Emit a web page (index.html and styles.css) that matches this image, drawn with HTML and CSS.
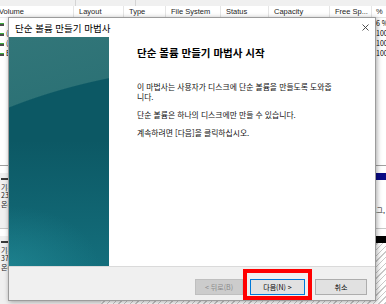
FILE: index.html
```html
<!DOCTYPE html>
<html lang="ko">
<head>
    <meta charset="UTF-8">
    <meta name="viewport" content="width=device-width, initial-scale=1.0">
    <title>디스크 관리 - 단순 볼륨 만들기 마법사</title>
    <link rel="stylesheet" href="styles.css">
</head>
<body>
    <div class="disk-manager">
        <div class="toolbar">
            <span class="tool"></span>
            <span class="tool tool-small"></span>
        </div>
        <div class="volume-list">
            <div class="list-header">
                <div class="col c-volume">Volume</div>
                <div class="col c-layout">Layout</div>
                <div class="col c-type">Type</div>
                <div class="col c-fs">File System</div>
                <div class="col c-status">Status</div>
                <div class="col c-capacity">Capacity</div>
                <div class="col c-free">Free Sp...</div>
                <div class="col c-pct">%</div>
            </div>
            <!-- only the edges of the list show around the dialog -->
            <div class="list-row">
                <div class="cell c-volume"><span class="vol-icon"></span></div>
                <div class="cell c-hidden"></div>
                <div class="cell c-pct">6 %</div>
            </div>
            <div class="list-row">
                <div class="cell c-volume"><span class="vol-icon"></span>(디</div>
                <div class="cell c-hidden"></div>
                <div class="cell c-pct">100 %</div>
            </div>
            <div class="list-row">
                <div class="cell c-volume"><span class="vol-icon"></span>(디</div>
                <div class="cell c-hidden"></div>
                <div class="cell c-pct">100 %</div>
            </div>
            <div class="list-row">
                <div class="cell c-volume"><span class="vol-icon"></span>E</div>
                <div class="cell c-hidden"></div>
                <div class="cell c-pct">100 %</div>
            </div>
        </div>
        <div class="disk-map">
            <div class="disk">
                <div class="disk-label">
                    <div><span class="disk-icon"></span></div>
                    <div>기본</div>
                    <div>238</div>
                    <div>온라인</div>
                </div>
                <div class="partition">
                    <div class="part-bar"></div>
                    <div class="part-line"></div>
                    <div class="part-line"></div>
                    <div class="part-line"></div>
                    <div class="part-line part-tail"><span>로그,</span></div>
                </div>
            </div>
            <div class="disk">
                <div class="disk-label">
                    <div><span class="disk-icon"></span></div>
                    <div>기본</div>
                    <div>372</div>
                    <div>온라인</div>
                </div>
                <div class="partition unallocated">
                    <div class="part-bar"></div>
                    <div class="hatch"></div>
                </div>
            </div>
        </div>
    </div>

    <div class="wizard">
        <div class="wizard-title">
            <span>단순 볼륨 만들기 마법사</span>
            <svg class="close" width="7" height="7" viewBox="0 0 7 7">
                <path d="M0.5 0.5L6.5 6.5M6.5 0.5L0.5 6.5" stroke="#3c3c3c" stroke-width="0.9" fill="none"/>
            </svg>
        </div>
        <div class="wizard-body">
            <div class="wizard-art"></div>
            <div class="wizard-content">
                <h1>단순 볼륨 만들기 마법사 시작</h1>
                <p>이 마법사는 사용자가 디스크에 단순 볼륨을 만들도록 도와줍<br>니다.</p>
                <p>단순 볼륨은 하나의 디스크에만 만들 수 있습니다.</p>
                <p>계속하려면 [다음]을 클릭하십시오.</p>
            </div>
        </div>
        <div class="wizard-footer">
            <button class="btn btn-back" disabled>&lt; 뒤로(B)</button>
            <button class="btn btn-next">다음(N) &gt;</button>
            <button class="btn btn-cancel">취소</button>
            <span class="highlight"></span>
        </div>
    </div>
</body>
</html>
```

FILE: styles.css
```css
body {
    margin: 0;
    width: 386px;
    height: 304px;
    overflow: hidden;
    position: relative;
    background-color: #ffffff;
    font-family: 'Liberation Sans', 'Noto Sans CJK KR', sans-serif;
    color: #000000;
}

/* background: disk management window */
.disk-manager {
    height: 304px;
    display: flex;
    flex-direction: column;
    overflow: hidden;
}

.toolbar {
    height: 6px;
    flex: none;
    display: flex;
    background-color: #f0f0f0;
}

.tool {
    width: 75px;
    border-right: 1px solid #d4d4d4;
}

.tool-small {
    width: 59px;
}

.volume-list {
    height: 159px;
    flex: none;
    background-color: #ffffff;
}

.list-header {
    display: flex;
    height: 11px;
    margin-left: -4px;
    border-bottom: 1px solid #e5e5e5;
    font-size: 7.5px;
    line-height: 11px;
    color: #1e1e1e;
}

.list-row {
    display: flex;
    height: 10px;
    margin-left: -4px;
    font-size: 7px;
    line-height: 10px;
    font-family: 'Noto Sans CJK KR', 'Liberation Sans', sans-serif;
}

.col, .cell {
    flex: none;
    box-sizing: border-box;
    padding-left: 5px;
    white-space: nowrap;
    overflow: hidden;
}

.col {
    border-right: 1px solid #e5e5e5;
}

.c-volume { width: 78px; padding-left: 3px; }
.c-layout { width: 50px; }
.c-type { width: 42px; }
.c-fs { width: 55px; }
.c-status { width: 48px; }
.c-capacity { width: 61px; }
.c-free { width: 42px; }
.c-hidden { width: 298px; }
.c-pct { width: 30px; padding-left: 4px; }

.vol-icon {
    display: inline-block;
    width: 5px;
    height: 2px;
    margin-right: 2px;
    vertical-align: middle;
    background-color: #4d4d4d;
    border-top: 1px solid #3fae3f;
}

.disk-map {
    flex: 1;
    min-height: 0;
    overflow: hidden;
    border-top: 1px solid #a0a0a0;
    background-color: #ffffff;
}

.disk {
    display: flex;
    height: 55px;
    padding-top: 7px;
    border-bottom: 1px solid #c8c8c8;
}

.disk:last-child {
    height: 70px;
}

.disk-label {
    width: 100px;
    padding: 1px 0 0 1px;
    background-color: #f0f0f0;
    font-family: 'Noto Sans CJK KR', sans-serif;
    font-size: 7px;
    line-height: 8.5px;
    color: #222222;
}

.disk-icon {
    display: inline-block;
    width: 7px;
    height: 2px;
    vertical-align: middle;
    background-color: #3a3a3a;
}

.partition {
    flex: 1;
    min-width: 0;
    display: flex;
    flex-direction: column;
    font-family: 'Noto Sans CJK KR', sans-serif;
    font-size: 7px;
    line-height: 8.5px;
    color: #222222;
}

.part-bar {
    height: 7px;
    flex: none;
    background-color: #0a0a84;
}

.part-line {
    height: 8.5px;
    padding-left: 3px;
    white-space: nowrap;
}

.part-tail {
    display: flex;
    justify-content: flex-end;
    overflow: hidden;
    padding-right: 1px;
}

.unallocated .part-bar {
    background-color: #000000;
}

.hatch {
    flex: 1;
    background: repeating-linear-gradient(135deg, #ffffff 0 3px, #c9c9c9 3px 4px);
}

/* wizard dialog on top */
.wizard {
    position: absolute;
    left: 8px;
    top: 17px;
    width: 368px;
    height: 284px;
    box-sizing: border-box;
    display: flex;
    flex-direction: column;
    border: 1px solid #9c9c9c;
    background-color: #ffffff;
    box-shadow: 1px 1px 5px rgba(0, 0, 0, 0.35);
    font-family: 'Noto Sans CJK KR', sans-serif;
}

.wizard-title {
    height: 19px;
    flex: none;
    display: flex;
    align-items: center;
    justify-content: space-between;
    padding: 0 6px;
    font-size: 9.5px;
    color: #000000;
}

.wizard-body {
    flex: 1;
    display: flex;
}

.wizard-art {
    width: 100px;
    flex: none;
    background:
        radial-gradient(ellipse 90px 60px at 0 100%, rgba(40, 150, 162, 0.45), transparent),
        linear-gradient(to bottom, transparent 45%, rgba(26, 128, 143, 0.55) 100%),
        radial-gradient(ellipse 400px 200px at 250px 226px, #0c5864 99.5%, transparent 100%),
        linear-gradient(165deg, #327679, #1d666c);
}

.wizard-content {
    flex: 1;
    padding: 9px 0 0 28px;
    white-space: nowrap;
}

.wizard-content h1 {
    margin: 0 0 23px 0;
    font-size: 10.5px;
    line-height: 13px;
    font-weight: bold;
}

.wizard-content p {
    margin: 0 0 8px 0;
    font-size: 7.8px;
    line-height: 10px;
    color: #111111;
}

.wizard-footer {
    height: 34px;
    flex: none;
    position: relative;
    display: flex;
    justify-content: flex-end;
    align-items: flex-start;
    padding: 12px 8px 0 0;
    box-sizing: border-box;
    border-top: 1px solid #dadada;
    background-color: #f0f0f0;
}

.btn {
    height: 16px;
    padding: 0;
    box-sizing: border-box;
    border: 1px solid #adadad;
    background-color: #e1e1e1;
    font-family: 'Noto Sans CJK KR', sans-serif;
    font-size: 7px;
    line-height: 14px;
    color: #000000;
}

.btn-back {
    width: 48px;
    background-color: #cccccc;
    border-color: #bfbfbf;
    color: #8a8a8a;
}

.btn-next {
    width: 55px;
    margin-left: 7px;
    border-color: #0078d7;
}

.btn-cancel {
    width: 52px;
    margin-left: 10px;
}

/* red marker drawn over the Next button */
.highlight {
    position: absolute;
    left: 234px;
    top: 2px;
    width: 69px;
    height: 31px;
    box-sizing: border-box;
    border: 4px solid #ff0000;
}
```
